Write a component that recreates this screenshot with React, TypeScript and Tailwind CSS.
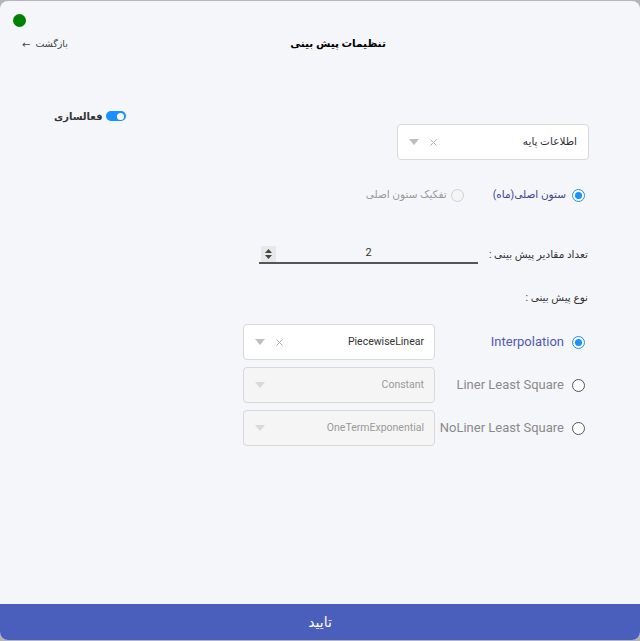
import { X } from 'lucide-react'

const OPTIONS = [
  { id: 'interp', label: 'Interpolation', value: 'PiecewiseLinear', active: true },
  { id: 'lls', label: 'Liner Least Square', value: 'Constant', active: false },
  { id: 'nlls', label: 'NoLiner Least Square', value: 'OneTermExponential', active: false },
]

function Caret({ light }: { light?: boolean }) {
  return (
    <svg width="10" height="6" viewBox="0 0 10 6" className={light ? 'text-[#d9d9d9]' : 'text-[#bfbfbf]'}>
      <path d="M0 0h10L5 6z" fill="currentColor" />
    </svg>
  )
}

function Radio({ checked, disabled }: { checked?: boolean; disabled?: boolean }) {
  if (checked) {
    return (
      <span className="w-[13px] h-[13px] rounded-full border border-[#1890ff] flex items-center justify-center shrink-0 bg-white">
        <span className="w-[7px] h-[7px] rounded-full bg-[#1890ff]" />
      </span>
    )
  }
  return <span className={`w-[13px] h-[13px] rounded-full border shrink-0 ${disabled ? 'border-[#d0d0d0] bg-[#f5f5f5]' : 'border-[#555] bg-white'}`} />
}

export default function App() {
  return (
    <div className="h-[641px] bg-[#b5b5b5] pt-px font-['Roboto','DejaVu_Sans',sans-serif]">
      <div dir="rtl" className="h-[639px] rounded-lg bg-[#f5f6fa] flex flex-col overflow-hidden">
        <div className="flex justify-end pl-[13px] pt-[13px]">
          <span className="w-[13px] h-[13px] rounded-full bg-[#008000]" />
        </div>

        <div className="grid grid-cols-3 items-center h-[20px] mt-[7px]">
          <div />
          <div className="text-center text-[10.5px] font-bold text-black pl-[36px] whitespace-nowrap">تنظیمات پیش بینی</div>
          <div className="flex justify-end pl-[22px]">
            <span className="flex items-center gap-[5px] text-[9.5px] text-[#444]">
              <span>بازگشت</span>
              <span className="text-[10px]">←</span>
            </span>
          </div>
        </div>

        <div className="flex justify-end h-[16px] mt-[54px] pl-[54px]">
          <div className="flex items-center gap-[3px]">
            <span className="w-[20px] h-[10px] rounded-full bg-[#1890ff] flex items-center justify-start pr-[2px]">
              <span className="w-[7px] h-[7px] rounded-full bg-white" />
            </span>
            <span className="text-[10px] font-bold text-[#333]">فعالسازی</span>
          </div>
        </div>

        <div className="pr-[51px]">
          <div className="w-[192px] h-[36px] bg-white border border-[#d9d9d9] rounded-[4px] flex items-center px-[11px]">
            <span className="flex-1 text-[10.5px] text-[#333]">اطلاعات پایه</span>
            <X size={11} strokeWidth={2} className="text-[#a8a8a8] ml-[9px]" />
            <Caret />
          </div>
        </div>

        <div className="flex items-center h-[16px] mt-[27px] pr-[55px] gap-[29px]">
          <label className="flex items-center gap-[6px]">
            <Radio checked />
            <span className="text-[10.5px] text-[#3f4590]">ستون اصلی(ماه)</span>
          </label>
          <label className="flex items-center gap-[4px]">
            <Radio disabled />
            <span className="text-[10.5px] text-[#9a9a9a]">تفکیک ستون اصلی</span>
          </label>
        </div>

        <div className="flex items-center mt-[42px] pr-[52px] gap-[10px]">
          <span className="w-[100px] whitespace-nowrap text-[10.5px] text-[#333]">تعداد مقادیر پیش بینی :</span>
          <div className="w-[219px] h-[19px] border-b-2 border-[#555] flex items-center" dir="ltr">
            <span className="w-[15px] h-[16px] ml-[2px] bg-[#e8e8e8] flex flex-col items-center justify-center gap-[2px]">
              <svg width="7" height="4" viewBox="0 0 7 4"><path d="M0 4L3.5 0L7 4z" fill="#444" /></svg>
              <svg width="7" height="4" viewBox="0 0 7 4"><path d="M0 0h7L3.5 4z" fill="#444" /></svg>
            </span>
            <span className="flex-1 text-center text-[11px] text-[#333] pr-[17px]">2</span>
          </div>
        </div>

        <div className="h-[16px] flex items-center mt-[26px] pr-[52px]">
          <span className="text-[10.5px] text-[#333]">نوع پیش بینی :</span>
        </div>

        <div className="flex flex-col gap-[7px] mt-[18px] pr-[55px]">
          {OPTIONS.map(o => (
            <div key={o.id} className="flex items-center h-[36px]">
              <Radio checked={o.active} />
              <span className={`w-[122px] mr-[8px] ml-[7px] whitespace-nowrap text-[13px] ${o.active ? 'text-[#5258b8]' : 'text-[#8a8a8a]'}`}>
                {o.label}
              </span>
              <div className={`w-[192px] h-[36px] border border-[#d9d9d9] rounded-[4px] flex items-center pr-[10px] pl-[11px] ${o.active ? 'bg-white' : 'bg-[#f5f5f5]'}`}>
                <span className={`flex-1 text-[10.5px] ${o.active ? 'text-[#333]' : 'text-[#9a9a9a]'}`}>{o.value}</span>
                {o.active && <X size={11} strokeWidth={2} className="text-[#a8a8a8] ml-[9px]" />}
                <Caret light={!o.active} />
              </div>
            </div>
          ))}
        </div>

        <div className="flex-1" />
        <button className="h-[36px] w-full bg-[#4a5ebc] text-white text-[14px] flex items-center justify-center">تایید</button>
      </div>
    </div>
  )
}
